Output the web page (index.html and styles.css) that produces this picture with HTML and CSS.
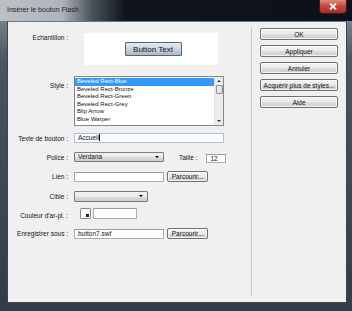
FILE: index.html
```html
<!DOCTYPE html>
<html lang="fr">
<head>
  <meta charset="UTF-8">
  <title>Insérer le bouton Flash</title>
  <link rel="stylesheet" href="styles.css">
</head>
<body>
  <div class="window">
    <div class="titlebar">
      <span class="title">Insérer le bouton Flash</span>
      <span class="close">
        <svg width="8" height="7" viewBox="0 0 8 7"><path d="M1 0.5 L7 6.5 M7 0.5 L1 6.5" stroke="#fff" stroke-width="1.8"/></svg>
      </span>
    </div>
    <div class="client">
      <div class="form">
        <div class="row row-sample">
          <label>Echantillon :</label>
          <div class="sample"><span class="sample-btn">Button Text</span></div>
        </div>
        <div class="row row-style">
          <label>Style :</label>
          <div class="listbox">
            <ul class="items">
              <li class="selected">Beveled Rect-Blue</li>
              <li>Beveled Rect-Bronze</li>
              <li>Beveled Rect-Green</li>
              <li>Beveled Rect-Grey</li>
              <li>Blip Arrow</li>
              <li>Blue Warper</li>
            </ul>
            <div class="scrollbar">
              <span class="arrow up"></span>
              <span class="thumb"></span>
              <span class="track"></span>
              <span class="arrow down"></span>
            </div>
          </div>
        </div>
        <div class="row row-text">
          <label>Texte de bouton :</label>
          <div class="input wide focused">Accueil<span class="caret"></span></div>
        </div>
        <div class="row row-font">
          <label>Police :</label>
          <div class="select font-select">Verdana<span class="drop"></span></div>
          <span class="size-label">Taille :</span>
          <div class="input size">12</div>
        </div>
        <div class="row row-link">
          <label>Lien :</label>
          <div class="input medium"></div>
          <span class="btn browse">Parcourir...</span>
        </div>
        <div class="row row-target">
          <label>Cible :</label>
          <div class="select target-select"><span class="drop"></span></div>
        </div>
        <div class="row row-color">
          <label>Couleur d'ar-pl. :</label>
          <span class="swatch"><span class="corner"></span></span>
          <div class="input color"></div>
        </div>
        <div class="row row-save">
          <label>Enregistrer sous :</label>
          <div class="input medium">button7.swf</div>
          <span class="btn browse">Parcourir...</span>
        </div>
      </div>
      <div class="sep"></div>
      <div class="actions">
        <span class="btn">OK</span>
        <span class="btn">Appliquer</span>
        <span class="btn">Annuler</span>
        <span class="btn">Acquérir plus de styles...</span>
        <span class="btn">Aide</span>
      </div>
    </div>
  </div>
</body>
</html>
```

FILE: styles.css
```css
* {
  margin: 0;
  padding: 0;
  box-sizing: border-box;
}
body {
  width: 352px;
  height: 311px;
  overflow: hidden;
  font-family: 'Liberation Sans', Arial, sans-serif;
  font-size: 6.5px;
  color: #111;
}
.window {
  width: 352px;
  height: 311px;
  display: flex;
  flex-direction: column;
  background: linear-gradient(180deg, #8e979f 0, #4a5561 60px, #313c48 100%);
  padding: 0 5px 8px 7px;
}
.titlebar {
  height: 21px;
  margin: 0 -5px 0 -7px;
  padding: 0 7px;
  display: flex;
  align-items: flex-start;
  justify-content: space-between;
  background: linear-gradient(90deg, #bcc1c6 0, #aeb4ba 62px, #4a525b 92px, #10151d 125px, #0b101a 100%);
}
.title {
  margin-top: 6px;
  font-size: 7px;
  color: #1e2328;
}
.close {
  width: 28px;
  height: 14px;
  margin-right: -2px;
  display: flex;
  align-items: center;
  justify-content: center;
  border: 1px solid #3a1a18;
  border-top: none;
  border-radius: 0 0 4px 4px;
  background: linear-gradient(180deg, #e08a80 0, #c7473b 45%, #a92c20 100%);
}
.client {
  flex: 1;
  display: flex;
  background: #f0f0f0;
  border: 1px solid #3c4651;
  border-top-color: #6d7780;
}
.form {
  width: 243px;
  padding-top: 11px;
}
.row {
  display: flex;
  align-items: center;
}
.row label {
  width: 60px;
  margin-right: 6px;
  text-align: right;
  white-space: nowrap;
}
.row-sample {
  align-items: flex-start;
  height: 32px;
}
.row-sample label {
  margin-top: 1px;
}
.sample {
  width: 134px;
  height: 32px;
  margin-left: 10px;
  background: #fff;
  display: flex;
  align-items: center;
  justify-content: center;
}
.sample-btn {
  width: 57px;
  height: 14px;
  margin-left: 4px;
  display: flex;
  align-items: center;
  justify-content: center;
  font-size: 8px;
  color: #111;
  border: 1px solid #566575;
  border-radius: 1px;
  background: linear-gradient(180deg, #e6ebf0 0, #c9d4de 50%, #a9b9c8 100%);
}
.row-style {
  margin-top: 11px;
  align-items: flex-start;
}
.row-style label {
  margin-top: 6px;
}
.listbox {
  width: 150px;
  height: 50px;
  display: flex;
  background: #fff;
  border: 1px solid #82878f;
}
.items {
  flex: 1;
  list-style: none;
  padding-top: 1px;
}
.items li {
  height: 7.6px;
  line-height: 7.6px;
  padding-left: 2px;
  font-size: 6px;
  white-space: nowrap;
}
.items li.selected {
  background: #3399ff;
  color: #fff;
}
.scrollbar {
  width: 9px;
  display: flex;
  flex-direction: column;
  background: #ececec;
  border-left: 1px solid #e2e2e2;
}
.arrow {
  height: 8px;
  position: relative;
}
.arrow::after {
  content: '';
  position: absolute;
  left: 2px;
  top: 3px;
  border-left: 2px solid transparent;
  border-right: 2px solid transparent;
}
.arrow.up::after {
  border-bottom: 2px solid #333;
}
.arrow.down::after {
  border-top: 2px solid #333;
}
.thumb {
  height: 9px;
  margin: 0 0.5px;
  border: 1px solid #8e8f8f;
  border-radius: 1px;
  background: linear-gradient(90deg, #f3f3f3, #d8d8d8);
}
.track {
  flex: 1;
}
.input {
  height: 10px;
  padding: 0 3px;
  line-height: 8px;
  background: #fff;
  border: 1px solid #abadb3;
  border-top-color: #9a9ca4;
  white-space: nowrap;
}
.input.wide {
  width: 150px;
}
.input.focused {
  border-color: #a7c4e0;
}
.caret {
  display: inline-block;
  width: 1px;
  height: 7px;
  margin-left: 0.5px;
  vertical-align: -1px;
  background: #000;
}
.row-text {
  margin-top: 7px;
}
.row-font {
  margin-top: 8px;
}
.select {
  height: 10px;
  padding: 0 3px;
  position: relative;
  line-height: 8px;
  border: 1px solid #7b7b7b;
  border-radius: 1px;
  background: linear-gradient(180deg, #f2f2f2 0, #ebebeb 50%, #dcdcdc 51%, #cfcfcf 100%);
}
.drop {
  position: absolute;
  right: 4px;
  top: 3px;
  border-left: 2px solid transparent;
  border-right: 2px solid transparent;
  border-top: 2.5px solid #000;
}
.font-select {
  width: 90px;
}
.size-label {
  margin-left: 15px;
  margin-right: 9px;
}
.input.size {
  width: 20px;
  margin-top: 3px;
  height: 9px;
}
.row-link {
  margin-top: 8px;
}
.input.medium {
  width: 90px;
}
.btn {
  height: 11px;
  display: flex;
  align-items: center;
  justify-content: center;
  white-space: nowrap;
  border: 1px solid #707070;
  border-radius: 2px;
  background: linear-gradient(180deg, #f2f2f2 0, #ebebeb 50%, #dddddd 51%, #cfcfcf 100%);
  box-shadow: inset 0 0 0 1px rgba(255,255,255,0.7);
}
.browse {
  width: 41px;
  margin-left: 3px;
}
.row-target {
  margin-top: 9px;
}
.target-select {
  width: 74px;
  height: 11px;
}
.row-color {
  margin-top: 6px;
}
.row-color label {
  margin-top: 3px;
}
.swatch {
  width: 11px;
  height: 11px;
  margin-left: 6px;
  position: relative;
  background: #fff;
  border: 1px solid #8a8a8a;
  border-radius: 1px;
}
.corner {
  position: absolute;
  right: 1px;
  bottom: 1px;
  width: 3px;
  height: 3px;
  background: #222;
}
.input.color {
  width: 44px;
  height: 11px;
  margin-left: 2px;
}
.row-save {
  margin-top: 9px;
}
.sep {
  width: 1px;
  margin: 5px 0 6px;
  background: #c8c8c8;
}
.actions {
  width: 78px;
  margin-left: 8px;
  padding-top: 6px;
  display: flex;
  flex-direction: column;
  gap: 5px;
}
.actions .btn {
  height: 12px;
}
```
